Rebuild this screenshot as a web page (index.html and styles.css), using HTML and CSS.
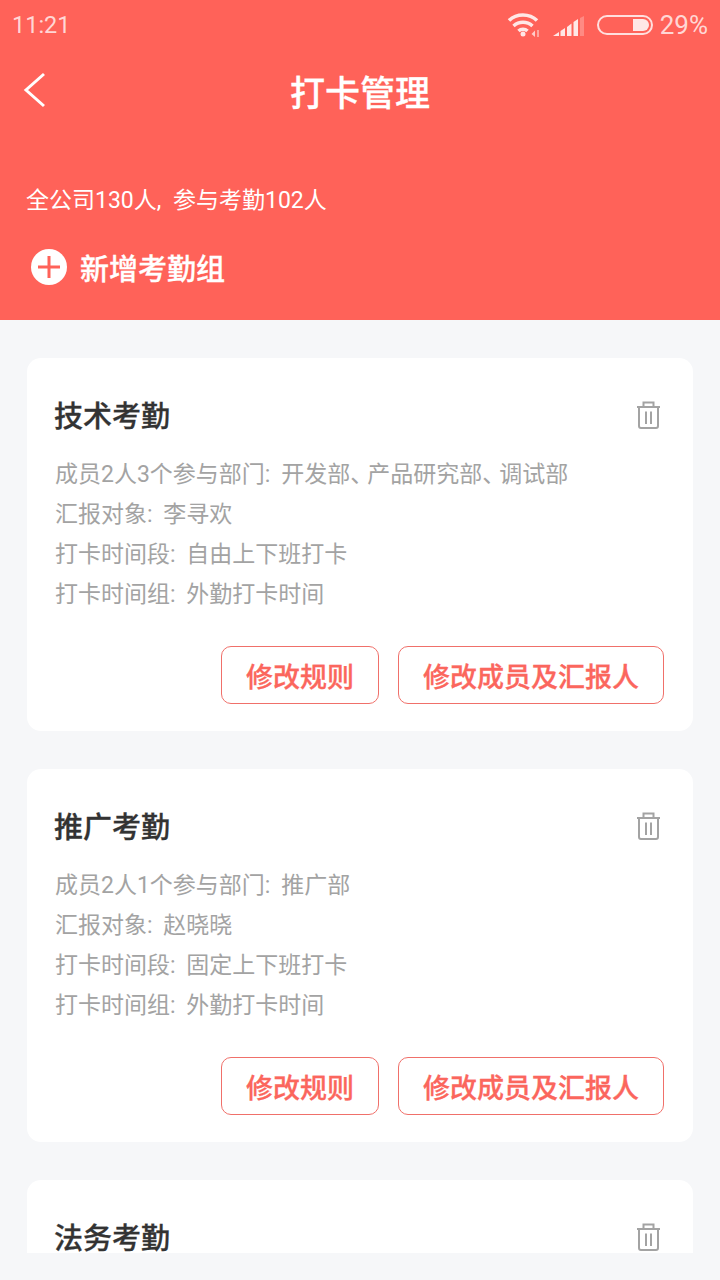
FILE: index.html
```html
<!DOCTYPE html>
<html lang="zh">
<head>
  <meta charset="utf-8">
  <title>打卡管理</title>
  <link rel="stylesheet" href="styles.css">
</head>
<body>
  <header class="top">
    <div class="status-bar">
      <span class="time">11:21</span>
      <div class="status-icons">
        <svg class="wifi" width="34" height="26" viewBox="0 0 34 26">
          <path d="M2 8.500 C9.500 1 22.500 1 30 8.500" fill="none" stroke="#fff" stroke-width="3.500"/>
          <path d="M6.500 14 C12 9 20 9 25.500 14" fill="none" stroke="#fff" stroke-width="3.500"/>
          <path d="M11.500 19 C14 16.500 18 16.500 20.500 19" fill="none" stroke="#fff" stroke-width="3.500"/>
          <circle cx="16" cy="22" r="2.500" fill="#fff"/>
          <path d="M24.500 22 L28 18.500 V25 Z" fill="#fff" opacity=".8"/>
          <rect x="30" y="18" width="2" height="7" fill="#fff" opacity=".5"/>
        </svg>
        <svg class="signal" width="32" height="22" viewBox="0 0 32 22">
          <path d="M0 20 L6 16 V20 Z" fill="#fff"/>
          <path d="M7.500 15 L12 12 V20 H7.500 Z" fill="#fff"/>
          <path d="M14 11 L18.500 7.500 V20 H14 Z" fill="#fff"/>
          <path d="M20.500 6 L25 3 V20 H20.500 Z" fill="#fff"/>
          <path d="M27 2 L31 0 V20 H27 Z" fill="#fff" opacity=".3"/>
        </svg>
        <span class="battery"><span class="battery-level"></span></span>
        <span class="percent">29%</span>
      </div>
    </div>
    <div class="nav">
      <svg class="back" width="24" height="36" viewBox="0 0 24 36">
        <path d="M22 2 L4 18 L22 34" fill="none" stroke="#fff" stroke-width="3"/>
      </svg>
      <h1 class="page-title">打卡管理</h1>
    </div>
    <p class="summary">全公司130人, 参与考勤102人</p>
    <div class="add-group">
      <svg width="36" height="36" viewBox="0 0 36 36">
        <circle cx="18" cy="18" r="18" fill="#fff"/>
        <path d="M7 18 H29 M18 7 V29" stroke="#ff6259" stroke-width="3"/>
      </svg>
      <span>新增考勤组</span>
    </div>
  </header>

  <main class="list">
    <section class="card">
      <div class="card-head">
        <h2 class="card-title">技术考勤</h2>
        <svg class="trash" width="26" height="30" viewBox="0 0 26 30">
          <path d="M1 6 H24 M7.500 6 V1.500 H17.500 V6 M3 6 V25 Q3 27 5 27 H20 Q22 27 22 25 V6 M10 10.500 V23 M15 10.500 V23" fill="none" stroke="#a3a3a3" stroke-width="2"/>
        </svg>
      </div>
      <ul class="info">
        <li>成员2人3个参与部门: 开发部<span class="pause">、</span>产品研究部<span class="pause">、</span>调试部</li>
        <li>汇报对象: 李寻欢</li>
        <li>打卡时间段: 自由上下班打卡</li>
        <li>打卡时间组: 外勤打卡时间</li>
      </ul>
      <div class="actions">
        <button class="btn">修改规则</button>
        <button class="btn">修改成员及汇报人</button>
      </div>
    </section>

    <section class="card">
      <div class="card-head">
        <h2 class="card-title">推广考勤</h2>
        <svg class="trash" width="26" height="30" viewBox="0 0 26 30">
          <path d="M1 6 H24 M7.500 6 V1.500 H17.500 V6 M3 6 V25 Q3 27 5 27 H20 Q22 27 22 25 V6 M10 10.500 V23 M15 10.500 V23" fill="none" stroke="#a3a3a3" stroke-width="2"/>
        </svg>
      </div>
      <ul class="info">
        <li>成员2人1个参与部门: 推广部</li>
        <li>汇报对象: 赵晓晓</li>
        <li>打卡时间段: 固定上下班打卡</li>
        <li>打卡时间组: 外勤打卡时间</li>
      </ul>
      <div class="actions">
        <button class="btn">修改规则</button>
        <button class="btn">修改成员及汇报人</button>
      </div>
    </section>

    <section class="card">
      <div class="card-head">
        <h2 class="card-title">法务考勤</h2>
        <svg class="trash" width="26" height="30" viewBox="0 0 26 30">
          <path d="M1 6 H24 M7.500 6 V1.500 H17.500 V6 M3 6 V25 Q3 27 5 27 H20 Q22 27 22 25 V6 M10 10.500 V23 M15 10.500 V23" fill="none" stroke="#a3a3a3" stroke-width="2"/>
        </svg>
      </div>
    </section>
  </main>
</body>
</html>
```

FILE: styles.css
```css
* {
  box-sizing: border-box;
}

html, body {
  margin: 0;
  height: 1280px;
  overflow: hidden;
}

body {
  background: #f6f7f9;
  font-family: Roboto, "Noto Sans CJK SC", sans-serif;
}

.top {
  height: 320px;
  background: #ff6259;
  color: #fff;
}

.status-bar {
  height: 50px;
  padding: 0 12px;
  display: flex;
  justify-content: space-between;
  align-items: center;
  color: rgba(255, 255, 255, .75);
  font-size: 23.5px;
}

.status-icons {
  display: flex;
  align-items: center;
}

.wifi {
  margin-right: 12px;
  opacity: .85;
}

.signal {
  margin-right: 12px;
  margin-top: 4px;
  opacity: .85;
}

.battery {
  width: 56px;
  height: 20px;
  border: 2px solid rgba(255, 255, 255, .8);
  border-radius: 10px;
  padding: 2px;
  display: flex;
  justify-content: flex-end;
  margin-right: 7px;
}

.battery-level {
  width: 16px;
  background: rgba(255, 255, 255, .85);
  border-radius: 0 7px 7px 0;
}

.percent {
  font-size: 26px;
}

.nav {
  height: 80px;
  display: flex;
  align-items: center;
  justify-content: center;
  position: relative;
}

.back {
  position: absolute;
  left: 22px;
  top: 22px;
}

.page-title {
  margin: 0;
  font-size: 35px;
  font-weight: 500;
  -webkit-text-stroke: .3px;
}

.summary {
  margin: 53px 0 0 26px;
  font-size: 23px;
  line-height: 36px;
  word-spacing: 6px;
}

.add-group {
  margin: 27px 0 0 31px;
  display: flex;
  align-items: center;
  gap: 13px;
  font-size: 29px;
  font-weight: 500;
  -webkit-text-stroke: .3px;
}

.list {
  height: 933px;
  padding: 38px 27px 0;
  overflow: hidden;
}

.card {
  height: 373px;
  margin-bottom: 38px;
  padding: 35px 29px 0 27px;
  background: #fff;
  border-radius: 14px;
}

.card-head {
  display: flex;
  justify-content: space-between;
  align-items: flex-start;
  height: 40px;
}

.card-title {
  margin: 4px 0 0;
  font-size: 29px;
  line-height: 40px;
  font-weight: 500;
  -webkit-text-stroke: .3px;
  color: #333;
}

.trash {
  margin-top: 8px;
  margin-right: 2px;
}

.info {
  list-style: none;
  margin: 22px 0 0 1px;
  padding: 0;
  font-size: 23px;
  line-height: 40px;
  color: #a3a3a3;
  word-spacing: 5px;
}

.pause {
  letter-spacing: -6px;
}

.actions {
  display: flex;
  justify-content: flex-end;
  gap: 19px;
  margin-top: 31px;
}

.btn {
  height: 58px;
  padding: 0 24px;
  background: #fff;
  border: 1px solid #f0706a;
  border-radius: 10px;
  color: #fb665d;
  font-family: inherit;
  font-size: 27px;
  font-weight: 500;
  -webkit-text-stroke: .3px;
}
```
